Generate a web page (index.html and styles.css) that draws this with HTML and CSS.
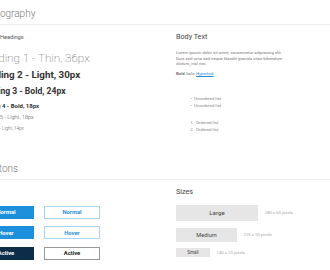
FILE: index.html
```html
<!DOCTYPE html>
<html>
<head>
<meta charset="utf-8">
<link rel="stylesheet" href="styles.css">
</head>
<body>
<div class="page">
  <section class="section section--type">
    <h2 class="section-title">Typography</h2>
    <div class="cols">
      <div class="col">
        <h3 class="col-label col-label--headings">Headings</h3>
        <div class="hd hd1">Heading 1 - Thin, 36px</div>
        <div class="hd hd2">Heading 2 - Light, 30px</div>
        <div class="hd hd3">Heading 3 - Bold, 24px</div>
        <div class="hd hd4">Heading 4 - Bold, 18px</div>
        <div class="hd hd5">Heading 5 - Light, 18px</div>
        <div class="hd hd6">Heading 6 - Light, 14px</div>
      </div>
      <div class="col">
        <h3 class="col-label">Body Text</h3>
        <p class="body">Lorem ipsum dolor sit amet, consectetur adipiscing elit.<br>Duis sed urna sed neque blandit gravida vitae bibendum<br>dictum, nisl nisi.</p>
        <p class="body body--inline"><b>Bold</b> <i>Italic</i> <a href="#" class="link">Hyperlink</a></p>
        <ul class="list list--ul">
          <li>Unordered list</li>
          <li>Unordered list</li>
        </ul>
        <ol class="list list--ol">
          <li>Ordered list</li>
          <li>Ordered list</li>
        </ol>
      </div>
    </div>
  </section>
  <section class="section section--buttons">
    <h2 class="section-title">Buttons</h2>
    <div class="cols">
      <div class="col">
        <div class="btn-grid">
          <span class="btn btn--fill">Normal</span>
          <span class="btn btn--outline">Normal</span>
          <span class="btn btn--fill">Hover</span>
          <span class="btn btn--outline">Hover</span>
          <span class="btn btn--fill btn--active">Active</span>
          <span class="btn btn--outline btn--outline-active">Active</span>
        </div>
      </div>
      <div class="col">
        <h3 class="col-label">Sizes</h3>
        <div class="size-row size-row--lg"><span class="size-btn size-btn--lg">Large</span><span class="size-caption">280 x 60 pixels</span></div>
        <div class="size-row size-row--md"><span class="size-btn size-btn--md">Medium</span><span class="size-caption">220 x 50 pixels</span></div>
        <div class="size-row size-row--sm"><span class="size-btn size-btn--sm">Small</span><span class="size-caption">140 x 25 pixels</span></div>
      </div>
    </div>
  </section>
</div>
</body>
</html>
```

FILE: styles.css
```css
* { box-sizing: border-box; }
html, body { margin: 0; padding: 0; background: #fff; overflow: hidden; }
body { font-family: Roboto, "Liberation Sans", sans-serif; color: #333; width: 330px; height: 270px; }

.page { margin-left: -22px; width: 420px; }

.section-title {
  margin: 0;
  font-size: 10px;
  line-height: 14px;
  font-weight: 300;
  color: #777;
  padding: 7px 0 3px 6px;
  border-bottom: 1px solid #eeeeee;
}
.section--buttons .section-title { margin-top: 22px; }

.cols { display: grid; grid-template-columns: 198px 1fr; align-items: start; }
.col { display: flex; flex-direction: column; }

.col-label {
  margin: 8px 0 0;
  font-size: 7.2px;
  line-height: 8px;
  font-weight: 400;
  color: #444;
}
.col-label--headings { margin-left: 22px; font-size: 5.6px; color: #555; }

.hd { white-space: nowrap; }
.hd1 { margin-top: 9px; font-size: 11.7px; line-height: 16px; font-weight: 100; color: #444; }
.hd2 { margin-top: 2px; font-size: 9.8px; line-height: 14px; font-weight: 700; color: #333; }
.hd3 { margin-top: 3px; font-size: 8.6px; line-height: 12px; font-weight: 700; color: #333; }
.hd4 { margin-top: 3.5px; font-size: 6px; line-height: 9px; font-weight: 700; color: #333; }
.hd5 { margin-top: 3.5px; font-size: 5.6px; line-height: 8px; font-weight: 300; color: #555; }
.hd6 { margin-top: 3.5px; font-size: 4.6px; line-height: 7px; font-weight: 300; color: #666; }

.body { margin: 9px 0 0; font-size: 4.3px; line-height: 5.5px; color: #777; white-space: nowrap; }
.body--inline { margin-top: 4.5px; }
.link { color: #2d8fd5; }

.list { margin: 0; padding: 0; list-style: none; font-size: 4.4px; line-height: 7px; color: #888; }
.list--ul { margin-top: 18.5px; }
.list--ol { margin-top: 9.5px; counter-reset: item; }
.list li { display: flex; }
.list--ul li::before { content: "•"; width: 16px; text-align: right; padding-right: 2px; }
.list--ol li { counter-increment: item; }
.list--ol li::before { content: counter(item) "."; width: 18px; text-align: right; padding-right: 2px; }

.btn-grid {
  margin-top: 26px;
  display: grid;
  grid-template-columns: 56px 56px;
  column-gap: 10px;
  row-gap: 7.5px;
}
.btn {
  height: 13px;
  display: flex;
  align-items: center;
  justify-content: center;
  font-size: 5.8px;
  font-weight: 700;
}
.btn--fill { background: #1c90dc; color: #fff; }
.btn--active { background: #0c2d49; }
.btn--outline { border: 1px solid #a9d3ee; color: #2f8fd3; background: #fff; }
.btn--outline-active { border-color: #999; color: #222; }

.size-row { display: flex; align-items: center; gap: 6.5px; }
.size-row--lg { margin-top: 9px; }
.size-row--md { margin-top: 7px; }
.size-row--sm { margin-top: 6px; }
.size-btn {
  display: flex;
  align-items: center;
  justify-content: center;
  background: #e6e6e6;
  color: #444;
}
.size-btn--lg { width: 82px; height: 16px; font-size: 6.2px; }
.size-btn--md { width: 61px; height: 14px; font-size: 5.6px; }
.size-btn--sm { width: 34px; height: 9px; font-size: 4.6px; }
.size-caption { font-size: 4.3px; color: #aaa; white-space: nowrap; }
```
